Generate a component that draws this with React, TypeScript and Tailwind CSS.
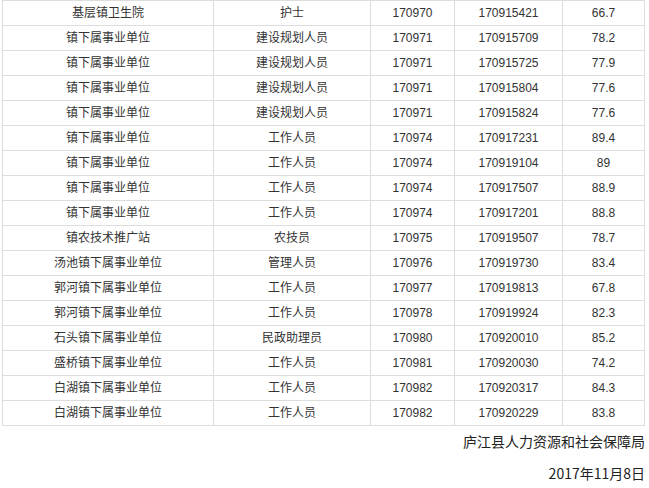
const ROWS = [
  ["基层镇卫生院", "护士", "170970", "170915421", "66.7"],
  ["镇下属事业单位", "建设规划人员", "170971", "170915709", "78.2"],
  ["镇下属事业单位", "建设规划人员", "170971", "170915725", "77.9"],
  ["镇下属事业单位", "建设规划人员", "170971", "170915804", "77.6"],
  ["镇下属事业单位", "建设规划人员", "170971", "170915824", "77.6"],
  ["镇下属事业单位", "工作人员", "170974", "170917231", "89.4"],
  ["镇下属事业单位", "工作人员", "170974", "170919104", "89"],
  ["镇下属事业单位", "工作人员", "170974", "170917507", "88.9"],
  ["镇下属事业单位", "工作人员", "170974", "170917201", "88.8"],
  ["镇农技术推广站", "农技员", "170975", "170919507", "78.7"],
  ["汤池镇下属事业单位", "管理人员", "170976", "170919730", "83.4"],
  ["郭河镇下属事业单位", "工作人员", "170977", "170919813", "67.8"],
  ["郭河镇下属事业单位", "工作人员", "170978", "170919924", "82.3"],
  ["石头镇下属事业单位", "民政助理员", "170980", "170920010", "85.2"],
  ["盛桥镇下属事业单位", "工作人员", "170981", "170920030", "74.2"],
  ["白湖镇下属事业单位", "工作人员", "170982", "170920317", "84.3"],
  ["白湖镇下属事业单位", "工作人员", "170982", "170920229", "83.8"],
];

const WIDTHS = ["w-[211px]", "w-[157px]", "w-[84px]", "w-[108px]", "w-[82px]"];

export default function App() {
  return (
    <div className="w-[649px] h-[488px] overflow-hidden bg-white text-[#333] font-['Liberation_Sans','Noto_Sans_CJK_SC',sans-serif]">
      {/* ── 成绩表 ── */}
      <div className="ml-[2px] w-[643px] border-l border-[#ddd]">
        {ROWS.map((r, i) => (
          <div key={i} className="flex h-[25px] border-t border-[#ddd] last:h-[26px] last:border-b">
            {r.map((c, j) => (
              <div
                key={j}
                className={`${WIDTHS[j]} shrink-0 flex items-center justify-center border-r border-[#ddd] text-[12px] leading-none`}
              >
                {c}
              </div>
            ))}
          </div>
        ))}
      </div>

      {/* ── 落款 ── */}
      <div className="pr-[4px] text-right text-[14px] text-[#222] font-['Noto_Sans_CJK_SC',sans-serif]">
        <p className="leading-[31px]">庐江县人力资源和社会保障局</p>
        <p className="leading-[32px]">2017年11月8日</p>
      </div>
    </div>
  );
}
